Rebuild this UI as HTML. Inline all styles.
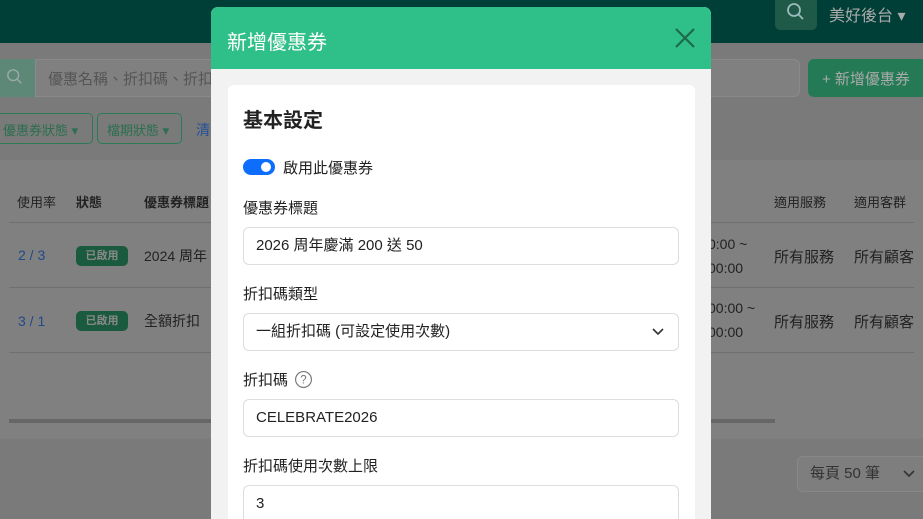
<!DOCTYPE html>
<html><head><meta charset="utf-8"><style>
*{box-sizing:border-box;margin:0;padding:0}
html,body{width:923px;height:519px;overflow:hidden}
body{position:relative;background:#7a7a7a;font-family:"Liberation Sans","Noto Sans CJK TC",sans-serif;font-size:14px;color:#222}
.a{position:absolute}
.nav{left:0;top:0;width:923px;height:43px;background:#003f37}
.t{white-space:nowrap}
.in{border:1px solid #ddd;border-radius:6px;font-size:15px;padding:0 0 0 12px;line-height:36px}
</style></head><body>
<div class="a nav"></div>
<div class="a" style="left:775px;top:0;width:42px;height:30px;background:#1f5a48;border-radius:0 0 5px 5px"></div>
<svg class="a" style="left:786px;top:2px" width="20" height="20" viewBox="0 0 20 20"><circle cx="8" cy="8" r="6" fill="none" stroke="#9bb" stroke-width="1.8"/><line x1="12.5" y1="12.5" x2="17" y2="17" stroke="#9bb" stroke-width="1.8"/></svg>
<div class="a t" style="left:829px;top:2px;font-size:16px;color:#aaa">美好後台 ▾</div>
<div class="a" style="left:0;top:59px;width:35px;height:38px;background:#5d8877"></div>
<svg class="a" style="left:6px;top:68px" width="18" height="18" viewBox="0 0 20 20"><circle cx="8" cy="8" r="6" fill="none" stroke="#9aa" stroke-width="1.6"/><line x1="12.5" y1="12.5" x2="17" y2="17" stroke="#9aa" stroke-width="1.6"/></svg>
<div class="a" style="left:35px;top:59px;width:765px;height:38px;background:#808080;border:1px solid #8a8a8a;border-radius:0 6px 6px 0"></div>
<div class="a t" style="left:48px;top:68px;font-size:15px;color:#555">優惠名稱、折扣碼、折扣</div>
<div class="a t" style="left:808px;top:59px;width:130px;height:38px;background:#237a55;border-radius:6px;color:#aaa;font-size:15px;padding:9px 0 0 14px">+ 新增優惠券</div>
<div class="a t" style="left:-10px;top:113px;width:103px;height:31px;border:1px solid #2b7a58;border-radius:5px;color:#2b6e50;font-size:13px;padding:6px 0 0 12px">優惠券狀態 ▾</div>
<div class="a t" style="left:97px;top:113px;width:85px;height:31px;border:1px solid #2b7a58;border-radius:5px;color:#2b6e50;font-size:13px;padding:6px 0 0 9px">檔期狀態 ▾</div>
<div class="a t" style="left:196px;top:120px;color:#1f4f9a;font-size:14px">清</div>
<div class="a" style="left:0;top:160px;width:923px;height:279px;background:#808080"></div>
<div class="a t" style="left:17px;top:192px;font-size:13px;color:#222">使用率</div>
<div class="a t" style="left:76px;top:192px;font-size:13px;font-weight:bold;color:#222">狀態</div>
<div class="a t" style="left:144px;top:192px;font-size:13px;font-weight:bold;color:#222">優惠券標題</div>
<div class="a t" style="left:774px;top:192px;font-size:13px;color:#222">適用服務</div>
<div class="a t" style="left:854px;top:192px;font-size:13px;color:#222">適用客群</div>
<div class="a" style="left:9px;top:222px;width:905px;height:1px;background:#6f6f6f"></div>
<div class="a" style="left:9px;top:287px;width:905px;height:1px;background:#6f6f6f"></div>
<div class="a" style="left:9px;top:352px;width:905px;height:1px;background:#6f6f6f"></div>
<div class="a t" style="left:18px;top:247px;font-size:14px;color:#1f4a8a">2 / 3</div>
<div class="a t" style="left:18px;top:313px;font-size:14px;color:#1f4a8a">3 / 1</div>
<div class="a t" style="left:76px;top:246px;width:52px;height:20px;background:#1a5a3e;border-radius:5px;color:#888;font-size:11px;font-weight:bold;text-align:center;line-height:20px">已啟用</div>
<div class="a t" style="left:76px;top:311px;width:52px;height:20px;background:#1a5a3e;border-radius:5px;color:#888;font-size:11px;font-weight:bold;text-align:center;line-height:20px">已啟用</div>
<div class="a t" style="left:144px;top:246px;font-size:14px">2024 周年</div>
<div class="a t" style="left:144px;top:311px;font-size:14px">全額折扣</div>
<div class="a t" style="left:708px;top:232px;font-size:14px;line-height:24px">0:00 ~<br>00:00</div>
<div class="a t" style="left:708px;top:296px;font-size:14px;line-height:24px">00:00 ~<br>00:00</div>
<div class="a t" style="left:774px;top:246px;font-size:15px">所有服務</div>
<div class="a t" style="left:854px;top:246px;font-size:15px">所有顧客</div>
<div class="a t" style="left:774px;top:311px;font-size:15px">所有服務</div>
<div class="a t" style="left:854px;top:311px;font-size:15px">所有顧客</div>
<div class="a" style="left:9px;top:419px;width:766px;height:4px;background:#666"></div>
<div class="a t" style="left:797px;top:456px;width:140px;height:36px;border:1px solid #888;border-radius:6px;background:#7e7e7e;font-size:15px;color:#333;padding:0 0 0 12px;line-height:34px">每頁 50 筆</div>
<svg class="a" style="left:902px;top:469px" width="14" height="10" viewBox="0 0 14 10"><path d="M2 2l5 5 5-5" fill="none" stroke="#333" stroke-width="1.6"/></svg>
<div class="a" style="left:211px;top:7px;width:500px;height:520px;background:#f2f2f2;border-radius:7px 7px 0 0;overflow:hidden">
<div style="height:62px;background:#2fbf88"></div>
</div>
<div class="a t" style="left:227px;top:26px;font-size:20px;color:#fff">新增優惠券</div>
<svg class="a" style="left:674px;top:27px" width="22" height="22" viewBox="0 0 22 22"><path d="M2 2L20 20M20 2L2 20" stroke="#1d6a48" stroke-width="2.2"/></svg>
<div class="a" style="left:228px;top:85px;width:467px;height:440px;background:#fff;border-radius:6px"></div>
<div class="a t" style="left:243px;top:104px;font-size:20px;font-weight:bold;color:#222">基本設定</div>
<div class="a" style="left:243px;top:159px;width:32px;height:16px;background:#0d6efd;border-radius:8px"></div>
<div class="a" style="left:261px;top:162px;width:10px;height:10px;background:#fff;border-radius:50%"></div>
<div class="a t" style="left:283px;top:157px;font-size:15px">啟用此優惠券</div>
<div class="a t" style="left:243px;top:197px;font-size:15px">優惠券標題</div>
<div class="a t in" style="left:243px;top:227px;width:436px;height:38px">2026 周年慶滿 200 送 50</div>
<div class="a t" style="left:243px;top:283px;font-size:15px">折扣碼類型</div>
<div class="a t in" style="left:243px;top:313px;width:436px;height:38px">一組折扣碼 (可設定使用次數)</div>
<svg class="a" style="left:651px;top:327px" width="14" height="10" viewBox="0 0 14 10"><path d="M2 2l5 5 5-5" fill="none" stroke="#333" stroke-width="1.6"/></svg>
<div class="a t" style="left:243px;top:369px;font-size:15px">折扣碼</div>
<svg class="a" style="left:294px;top:370px" width="19" height="19" viewBox="0 0 18 18"><circle cx="9" cy="9" r="7.5" fill="none" stroke="#777" stroke-width="1.1"/><text x="9" y="13" font-size="11" text-anchor="middle" fill="#777" font-family="Liberation Sans">?</text></svg>
<div class="a t in" style="left:243px;top:399px;width:436px;height:38px">CELEBRATE2026</div>
<div class="a t" style="left:243px;top:455px;font-size:15px">折扣碼使用次數上限</div>
<div class="a t in" style="left:243px;top:485px;width:436px;height:40px">3</div>
</body></html>
